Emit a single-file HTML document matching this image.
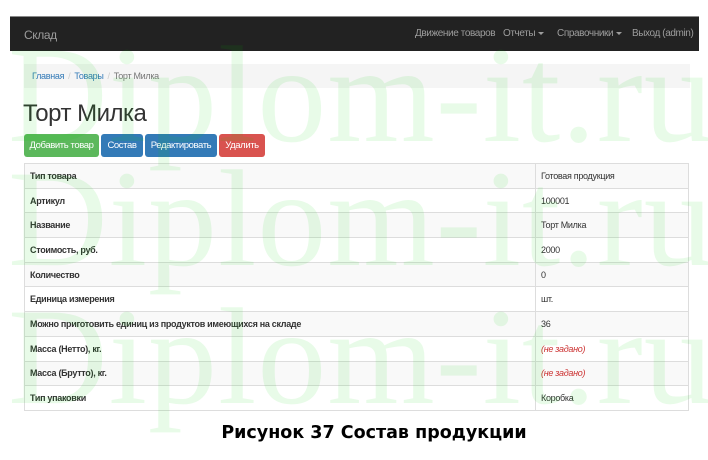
<!DOCTYPE html>
<html><head><meta charset="utf-8"><style>
*{box-sizing:border-box;margin:0;padding:0}
body{width:708px;height:460px;background:#fff;position:relative;overflow:hidden;font-family:"Liberation Sans",sans-serif;color:#333}
.nav{position:absolute;left:10px;top:16px;width:689px;height:35px;background:#222;border-top:1px solid #888}
.nav span{position:absolute;top:11px;color:#9d9d9d;font-size:10px;letter-spacing:-0.4px}
.brand{left:14px;font-size:12px!important;color:#9d9d9d}
.caret{display:inline-block;border-top:3px solid #9d9d9d;border-left:3px solid transparent;border-right:3px solid transparent;vertical-align:middle;margin-left:3px}
.bc{position:absolute;left:24px;top:64px;width:666px;height:24px;background:#f5f5f5;font-size:9px;padding:7px 8px;letter-spacing:-0.3px}
.bc a{color:#337ab7}
.bc i{color:#ccc;font-style:normal;padding:0 4px}
h1{position:absolute;left:23px;top:100px;font-size:24px;font-weight:400;color:#333;letter-spacing:-0.5px}
.btn{position:absolute;top:134px;height:23px;color:#fff;font-size:9.5px;border-radius:3px;text-align:center;line-height:23px;letter-spacing:-0.4px}
table{position:absolute;left:24px;top:163px;width:665px;border-collapse:collapse;font-size:9px;letter-spacing:-0.3px}
td{border:1px solid #ddd;height:24.7px;padding:0 5px}
td:first-child{font-weight:bold;width:511px}
tr:nth-child(odd){background:#f9f9f9}
.ns{color:#c33;font-style:italic}
.cap{position:absolute;left:0;width:748px;top:423px;text-align:center;font-family:"DejaVu Sans",sans-serif;font-weight:bold;font-size:17.5px;color:#000}
.wm{position:absolute;left:8px;font-family:"Liberation Serif",serif;font-size:138px;letter-spacing:1px;color:rgba(0,210,0,0.09);white-space:nowrap;line-height:1;pointer-events:none}
</style></head><body>
<div class="nav">
<span class="brand">Склад</span>
<span style="left:405px">Движение товаров</span>
<span style="left:493px">Отчеты<b class="caret"></b></span>
<span style="left:547px">Справочники<b class="caret"></b></span>
<span style="left:622px">Выход (admin)</span>
</div>
<div class="bc"><a>Главная</a><i>/</i><a>Товары</a><i>/</i><span style="color:#777">Торт Милка</span></div>
<h1>Торт Милка</h1>
<div class="btn" style="left:24px;width:75px;background:#5cb85c">Добавить товар</div>
<div class="btn" style="left:101px;width:42px;background:#337ab7">Состав</div>
<div class="btn" style="left:145px;width:72px;background:#337ab7">Редактировать</div>
<div class="btn" style="left:219px;width:46px;background:#d9534f">Удалить</div>
<table>
<tr><td>Тип товара</td><td>Готовая продукция</td></tr>
<tr><td>Артикул</td><td>100001</td></tr>
<tr><td>Название</td><td>Торт Милка</td></tr>
<tr><td>Стоимость, руб.</td><td>2000</td></tr>
<tr><td>Количество</td><td>0</td></tr>
<tr><td>Единица измерения</td><td>шт.</td></tr>
<tr><td>Можно приготовить единиц из продуктов имеющихся на складе</td><td>36</td></tr>
<tr><td>Масса (Нетто), кг.</td><td class="ns">(не задано)</td></tr>
<tr><td>Масса (Брутто), кг.</td><td class="ns">(не задано)</td></tr>
<tr><td>Тип упаковки</td><td>Коробка</td></tr>
</table>
<div class="cap">Рисунок 37 Состав продукции</div>
<div class="wm" style="top:26px">Diplom-it.ru</div>
<div class="wm" style="top:150px">Diplom-it.ru</div>
<div class="wm" style="top:288px">Diplom-it.ru</div>
</body></html>
